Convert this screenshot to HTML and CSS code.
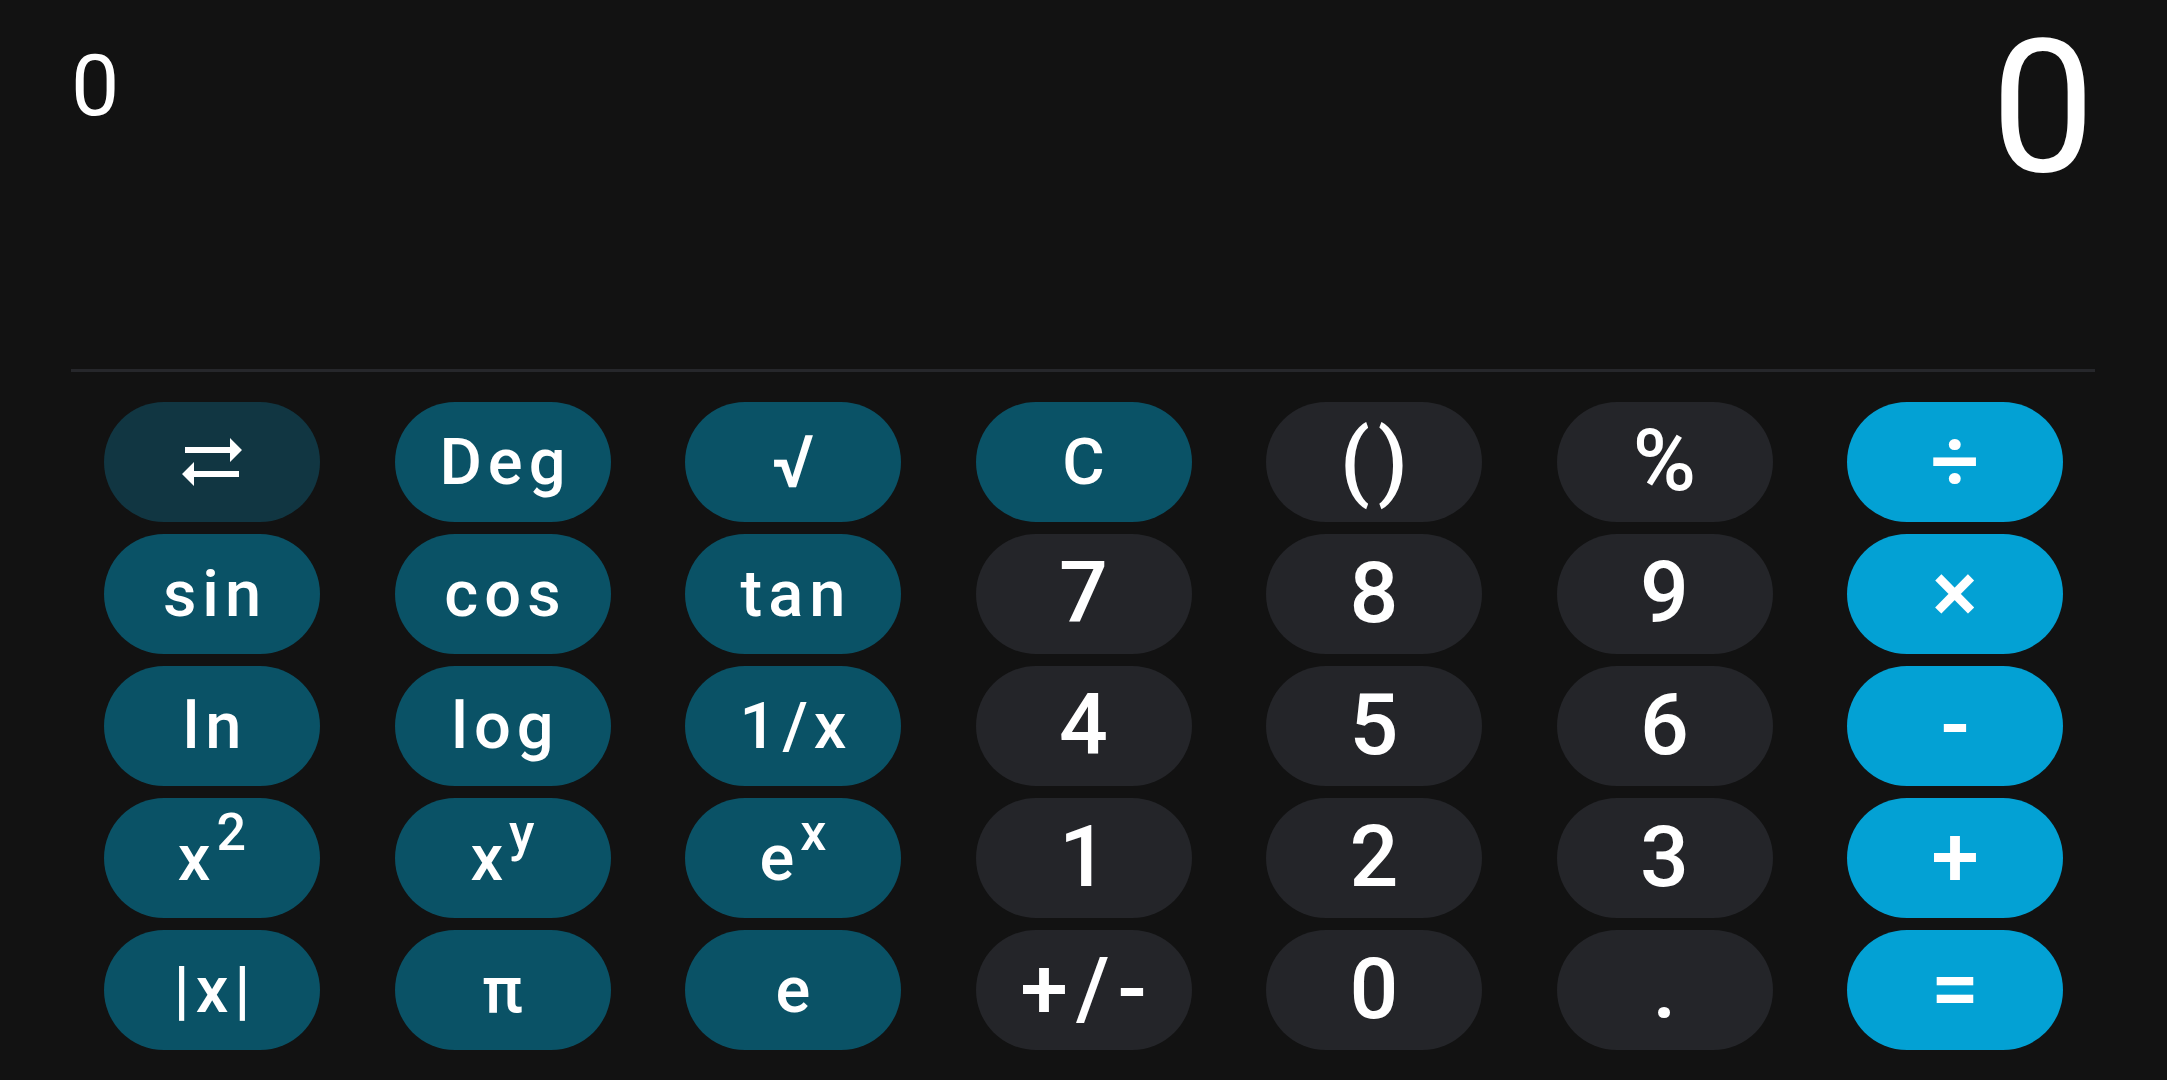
FILE: index.html
```html
<!DOCTYPE html>
<html lang="en">
<head>
<meta charset="utf-8">
<meta name="viewport" content="width=device-width, initial-scale=1">
<title>Calculator</title>
<link rel="stylesheet" href="styles.css">
</head>
<body>
<main class="calculator">
  <section class="display" aria-label="Display">
    <output class="expression">0</output>
    <output class="result">0</output>
  </section>
  <section class="keypad" aria-label="Keypad">
    <button type="button" class="key key-toggle" aria-label="Switch functions">
      <svg class="swap-icon" viewBox="0 0 60 48" aria-hidden="true">
        <path d="M3 9h45V0l12 12-12 12v-9H3zM57 33H12v-9L0 36l12 12v-9h45z"/>
      </svg>
    </button>
    <button type="button" class="key key-function">Deg</button>
    <button type="button" class="key key-function key-root">√</button>
    <button type="button" class="key key-function">C</button>
    <button type="button" class="key key-number">()</button>
    <button type="button" class="key key-number">%</button>
    <button type="button" class="key key-operator">÷</button>

    <button type="button" class="key key-function">sin</button>
    <button type="button" class="key key-function">cos</button>
    <button type="button" class="key key-function">tan</button>
    <button type="button" class="key key-number">7</button>
    <button type="button" class="key key-number">8</button>
    <button type="button" class="key key-number">9</button>
    <button type="button" class="key key-operator">×</button>

    <button type="button" class="key key-function">ln</button>
    <button type="button" class="key key-function">log</button>
    <button type="button" class="key key-function">1/x</button>
    <button type="button" class="key key-number">4</button>
    <button type="button" class="key key-number">5</button>
    <button type="button" class="key key-number">6</button>
    <button type="button" class="key key-operator">-</button>

    <button type="button" class="key key-function">x<sup>2</sup></button>
    <button type="button" class="key key-function">x<sup>y</sup></button>
    <button type="button" class="key key-function">e<sup>x</sup></button>
    <button type="button" class="key key-number">1</button>
    <button type="button" class="key key-number">2</button>
    <button type="button" class="key key-number">3</button>
    <button type="button" class="key key-operator">+</button>

    <button type="button" class="key key-function">|x|</button>
    <button type="button" class="key key-function">π</button>
    <button type="button" class="key key-function">e</button>
    <button type="button" class="key key-number">+/-</button>
    <button type="button" class="key key-number">0</button>
    <button type="button" class="key key-number">.</button>
    <button type="button" class="key key-operator">=</button>
  </section>
</main>
</body>
</html>
```
FILE: styles.css
```css
* {
  box-sizing: border-box;
}

body {
  margin: 0;
  background: #121212;
  color: #fff;
  font-family: Roboto, sans-serif;
}

.calculator {
  display: flex;
  flex-direction: column;
  min-height: 100vh;
  padding: 0 72px 0 71px;
}

.display {
  flex: 1;
  display: flex;
  justify-content: space-between;
  align-items: flex-start;
  padding-top: 22px;
  border-bottom: 3px solid #26272b;
}

.expression {
  font-size: 86px;
  line-height: 128px;
}

.result {
  font-size: 185px;
  line-height: 172px;
}

.keypad {
  display: grid;
  grid-template-columns: repeat(7, 216px);
  grid-auto-rows: 120px;
  row-gap: 12px;
  justify-content: space-between;
  padding: 30px 32px 30px 33px;
}

.key {
  display: block;
  padding: 0;
  border: 0;
  border-radius: 60px;
  color: inherit;
  font-family: inherit;
  font-weight: 500;
  text-align: center;
  cursor: pointer;
}

/* The indent balances the tracking that follows the last letter. */
.key-function {
  background: #0a5266;
  font-size: 65px;
  letter-spacing: 6px;
  text-indent: 6px;
}

.key-root {
  font-size: 73px;
}

.key-toggle {
  background: #113642;
}

.key-number {
  background: #242529;
  font-size: 86px;
  line-height: 118px;
  padding-bottom: 2px;
  letter-spacing: 8px;
  text-indent: 8px;
}

.key-operator {
  background: #03a1d4;
  font-size: 86px;
  line-height: 118px;
  padding-bottom: 2px;
}

.key sup {
  font-size: 52px;
  line-height: 0;
  vertical-align: 30px;
}

.swap-icon {
  display: block;
  width: 60px;
  height: 48px;
  margin: 0 auto;
  fill: currentColor;
}
```
